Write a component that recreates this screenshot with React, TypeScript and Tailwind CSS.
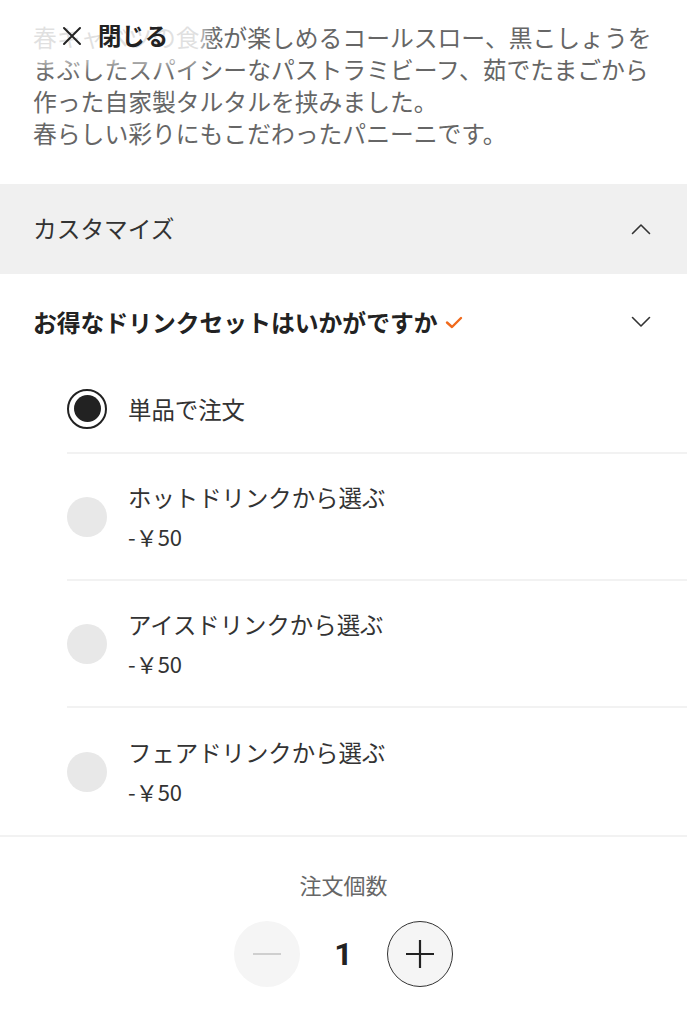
import React from "react";

const font = { fontFamily: '"Noto Sans CJK JP", "Noto Sans", sans-serif' };

function ChevronUp() {
  return (
    <svg width="20" height="12" viewBox="0 0 20 12" fill="none">
      <path d="M1.5 10.5 L10 2 L18.5 10.5" stroke="#333" strokeWidth="1.6" strokeLinecap="round" strokeLinejoin="round" />
    </svg>
  );
}

function ChevronDown() {
  return (
    <svg width="20" height="12" viewBox="0 0 20 12" fill="none">
      <path d="M1.5 1.5 L10 10 L18.5 1.5" stroke="#333" strokeWidth="1.6" strokeLinecap="round" strokeLinejoin="round" />
    </svg>
  );
}

function Option({ label, price, selected, last }: { label: string; price?: string; selected?: boolean; last?: boolean }) {
  return (
    <div className={`ml-[67px] flex items-center ${price ? "h-[127px]" : "h-[89px]"} ${last ? "" : "border-b-2 border-[#f2f2f2]"}`}>
      {selected ? (
        <div className="w-[40px] h-[40px] rounded-full border-2 border-[#222] flex items-center justify-center shrink-0">
          <div className="w-[27px] h-[27px] rounded-full bg-[#222]" />
        </div>
      ) : (
        <div className="w-[40px] h-[40px] rounded-full bg-[#e8e8e8] shrink-0" />
      )}
      <div className="ml-[21px] flex flex-col">
        <div className="text-[23.4px] leading-[32px] text-[#333]">{label}</div>
        {price && <div className="text-[22px] leading-[32px] text-[#333] mt-[7px]">{price}</div>}
      </div>
    </div>
  );
}

export default function App() {
  return (
    <div className="relative w-[687px] h-[1024px] bg-white overflow-hidden" style={font}>
      {/* description */}
      <div className="px-[33px] pt-[21px] text-[23.8px] leading-[32px] text-[#666]">
        <p>春キャベツの食感が楽しめるコールスロー、黒こしょうをまぶしたスパイシーなパストラミビーフ、茹でたまごから作った自家製タルタルを挟みました。</p>
        <p>春らしい彩りにもこだわったパニーニです。</p>
      </div>

      {/* close button overlay */}
      <div className="absolute left-[28px] top-[13px] h-[46px] w-[172px] rounded-[12px] bg-white/80 shadow-[0_0_14px_6px_rgba(255,255,255,0.7)] flex items-center pl-[34px]">
        <svg width="20" height="20" viewBox="0 0 20 20" fill="none">
          <path d="M2 2 L18 18 M18 2 L2 18" stroke="#222" strokeWidth="2" strokeLinecap="round" />
        </svg>
        <span className="ml-[16px] text-[23.4px] font-bold text-[#222] leading-none">閉じる</span>
      </div>

      {/* customize bar */}
      <div className="mt-[35px] h-[90px] bg-[#f0f0f0] flex items-center justify-between pl-[33px] pr-[36px]">
        <span className="text-[23.7px] text-[#333]">カスタマイズ</span>
        <ChevronUp />
      </div>

      {/* drink set header */}
      <div className="h-[96px] flex items-center justify-between pl-[33px] pr-[36px]">
        <div className="flex items-center">
          <span className="text-[23.8px] font-bold text-[#222]">お得なドリンクセットはいかがですか</span>
          <svg className="ml-[6px]" width="20" height="16" viewBox="0 0 20 16" fill="none">
            <path d="M3 8.5 L8 13 L17 4" stroke="#f06a1c" strokeWidth="2.4" strokeLinecap="round" strokeLinejoin="round" />
          </svg>
        </div>
        <ChevronDown />
      </div>

      {/* options */}
      <div className="-mt-[5px]">
        <Option label="単品で注文" selected />
        <Option label="ホットドリンクから選ぶ" price="-￥50" />
        <Option label="アイスドリンクから選ぶ" price="-￥50" />
        <Option label="フェアドリンクから選ぶ" price="-￥50" last />
      </div>
      <div className="border-b-2 border-[#f2f2f2]" />

      {/* quantity */}
      <div className="flex flex-col items-center pt-[31px]">
        <div className="text-[22px] leading-[32px] text-[#666]">注文個数</div>
        <div className="mt-[21px] flex items-center">
          <div className="w-[66px] h-[66px] rounded-full bg-[#f5f5f5] flex items-center justify-center">
            <div className="w-[28px] h-[2px] bg-[#cfcfcf]" />
          </div>
          <div className="w-[87px] text-center text-[32px] font-bold text-[#222]" style={{ fontFamily: '"Roboto", "Noto Sans", sans-serif' }}>1</div>
          <div className="w-[66px] h-[66px] rounded-full bg-[#f5f5f5] border-[1.5px] border-[#333] flex items-center justify-center">
            <svg width="30" height="30" viewBox="0 0 30 30" fill="none">
              <path d="M15 1 V29 M1 15 H29" stroke="#222" strokeWidth="2.2" />
            </svg>
          </div>
        </div>
      </div>
    </div>
  );
}
